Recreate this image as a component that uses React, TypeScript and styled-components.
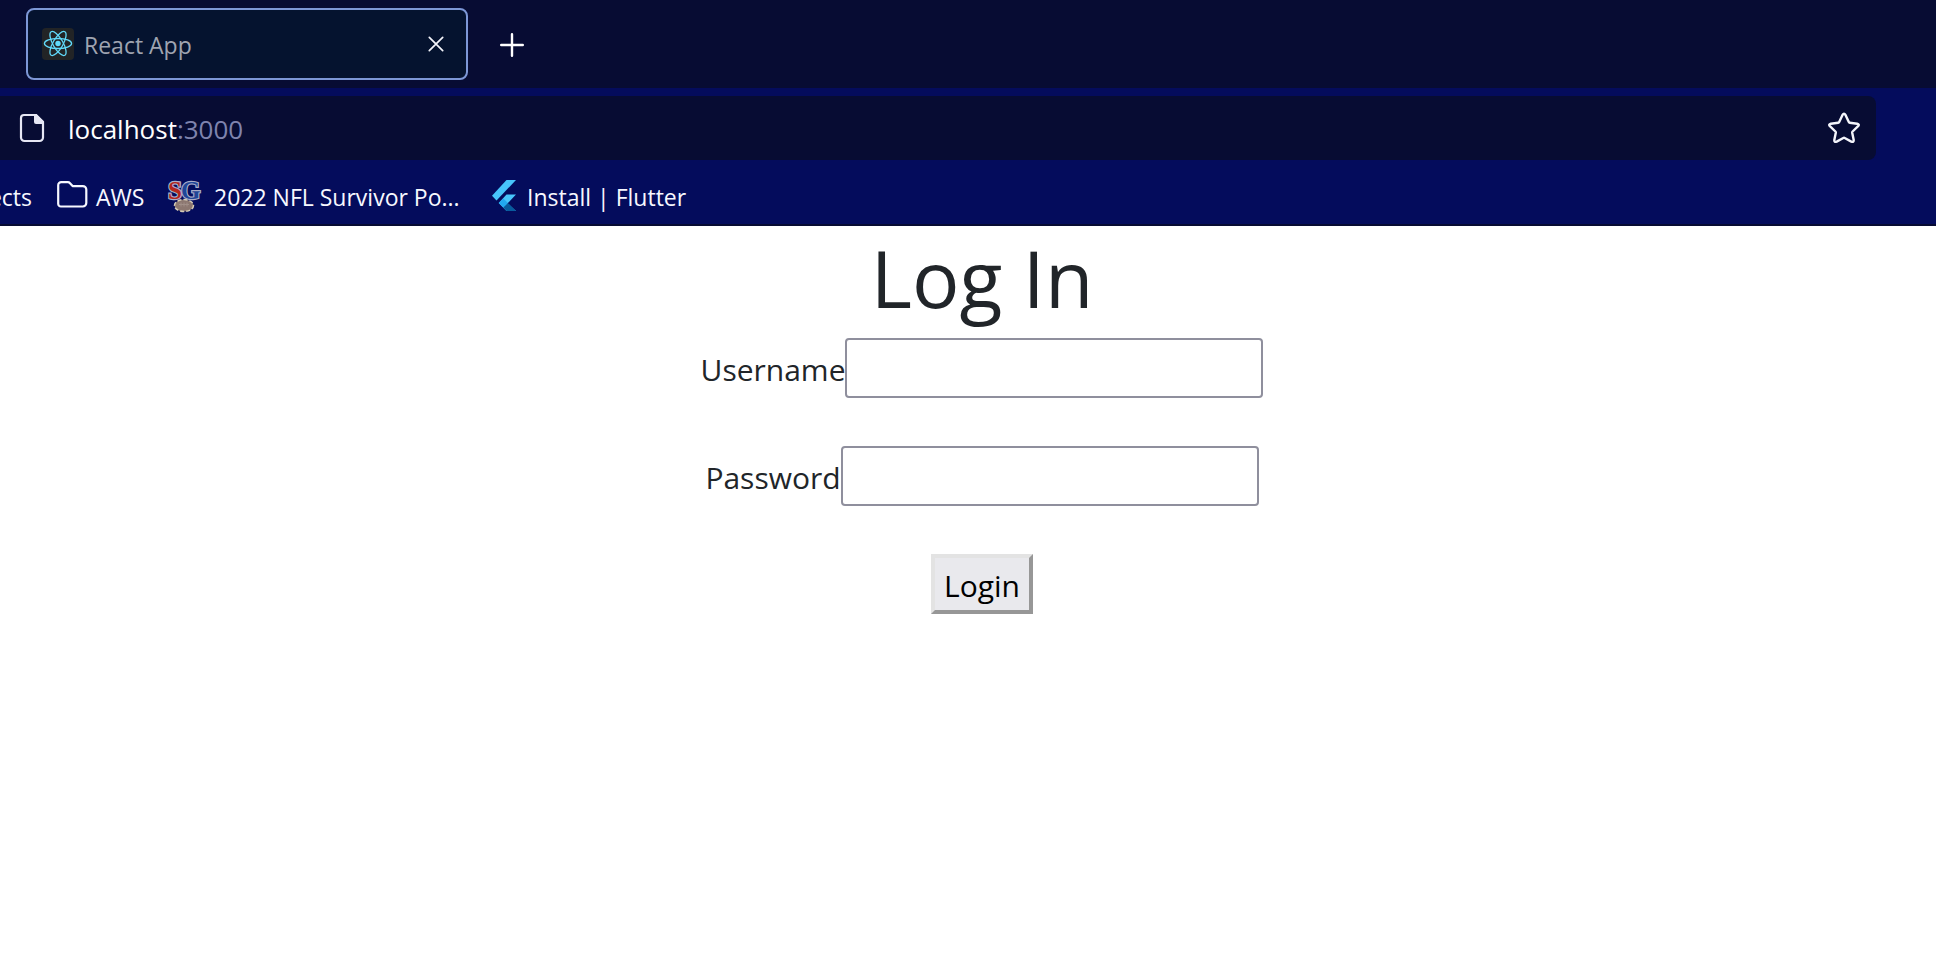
import React from "react";
import styled, { createGlobalStyle } from "styled-components";

const GlobalStyle = createGlobalStyle`
  *, *::before, *::after { box-sizing: border-box; }
  body {
    margin: 0;
    background: #ffffff;
    color: #212529;
    font-family: "Open Sans", "Noto Sans", sans-serif;
  }
`;

const Chrome = styled.header`
  background: #040c5c;
  border-bottom: 2px solid #070b33;
  overflow: hidden;
`;

const TabStrip = styled.div`
  display: flex;
  align-items: center;
  gap: 32px;
  height: 88px;
  padding-left: 26px;
  background: #070c33;
`;

const Tab = styled.div`
  display: flex;
  align-items: center;
  gap: 10px;
  width: 442px;
  height: 72px;
  padding: 0 22px 0 14px;
  background: #05132f;
  border: 2px solid #7d97d6;
  border-radius: 8px;
`;

const TabTitle = styled.span`
  flex: 1;
  padding-top: 2px;
  color: #9fa4b1;
  font-size: 23px;
  line-height: 32px;
`;

const IconButton = styled.button`
  display: flex;
  align-items: center;
  justify-content: center;
  padding: 0;
  border: 0;
  background: none;
  color: #f4f5fb;
`;

const UrlBar = styled.div`
  display: flex;
  align-items: center;
  justify-content: space-between;
  height: 64px;
  margin: 8px 60px 0 0;
  padding: 0 16px;
  background: #070c33;
  border-radius: 0 8px 8px 0;
  color: #e6e7f4;
`;

const Address = styled.div`
  display: flex;
  align-items: center;
  gap: 20px;
`;

const AddressText = styled.span`
  padding-top: 2px;
  color: #ffffff;
  font-size: 26px;
  line-height: 36px;
`;

const Port = styled.span`
  color: #7f84ae;
`;

const Bookmarks = styled.nav`
  display: flex;
  align-items: center;
  height: 64px;
  padding-top: 8px;
`;

const Bookmark = styled.a<{ $gap?: number; $width?: number }>`
  display: flex;
  flex: none;
  align-items: center;
  gap: ${(p) => p.$gap ?? 0}px;
  width: ${(p) => (p.$width ? `${p.$width}px` : "auto")};
  color: #f7f8ff;
  font-size: 23px;
  line-height: 32px;
  text-decoration: none;
  white-space: nowrap;
`;

const BookmarkTitle = styled.span`
  padding-top: 2px;
`;

const ClippedBookmark = styled(Bookmark)`
  justify-content: flex-end;
  width: 32px;
  margin-right: 24px;
`;

const Page = styled.main`
  padding-left: 28px;
  text-align: center;
`;

const Title = styled.h1`
  margin: 0 0 12px;
  padding-top: 4px;
  font-size: 79px;
  font-weight: 400;
  line-height: 96px;
`;

const Form = styled.form`
  display: flex;
  flex-direction: column;
  align-items: center;
  gap: 48px;
`;

const Field = styled.div`
  display: flex;
  align-items: center;
  height: 60px;
`;

const Label = styled.label`
  padding-top: 4px;
  font-size: 30px;
  line-height: 48px;
`;

const Input = styled.input`
  width: 418px;
  height: 60px;
  padding: 2px 4px;
  background: #ffffff;
  border: 2px solid #8f8f9d;
  border-radius: 4px;
  font: inherit;
  font-size: 30px;
`;

const LoginButton = styled.button`
  height: 60px;
  padding: 4px 9px 0;
  background: #e9e9ed;
  border: 4px solid;
  border-color: #e3e3e3 #979797 #979797 #e3e3e3;
  border-radius: 0;
  color: #000000;
  font-family: inherit;
  font-size: 30px;
  line-height: 48px;
`;

const ReactLogo = () => (
  <svg width="32" height="32" viewBox="0 0 32 32" aria-hidden="true">
    <rect width="32" height="32" rx="4" fill="#222426" />
    <g fill="none" stroke="#61dafb" strokeWidth="1.3">
      <ellipse cx="16" cy="15.5" rx="13.6" ry="5" />
      <ellipse cx="16" cy="15.5" rx="13.6" ry="5" transform="rotate(60 16 15.5)" />
      <ellipse cx="16" cy="15.5" rx="13.6" ry="5" transform="rotate(120 16 15.5)" />
    </g>
    <circle cx="16" cy="15.5" r="2.7" fill="#61dafb" />
  </svg>
);

const CloseIcon = () => (
  <svg width="16" height="16" viewBox="0 0 16 16" fill="none" stroke="currentColor" strokeWidth="1.7" strokeLinecap="round" aria-hidden="true">
    <path d="M1.300 1.300l13.400 13.400M14.700 1.300L1.300 14.700" />
  </svg>
);

const PlusIcon = () => (
  <svg width="24" height="26" viewBox="0 0 24 26" fill="none" stroke="#ffffff" strokeWidth="2.4" strokeLinecap="round" aria-hidden="true">
    <path d="M12 3.200v21.600M1.200 14h21.600" />
  </svg>
);

const PageIcon = () => (
  <svg width="32" height="32" viewBox="0 0 32 32" aria-hidden="true">
    <path d="M8 3h12l7 7v15.500a3.500 3.500 0 0 1-3.500 3.500H8.500a3.500 3.500 0 0 1-3.500-3.500V6a3 3 0 0 1 3-3z" fill="none" stroke="currentColor" strokeWidth="2.200" />
    <path d="M18 2h2.500L28 9.500V12h-8a2 2 0 0 1-2-2z" fill="currentColor" />
  </svg>
);

const StarIcon = () => (
  <svg width="32" height="32" viewBox="0 0 32 32" fill="none" stroke="currentColor" strokeWidth="2.4" strokeLinejoin="round" aria-hidden="true">
    <path d="M14.500 2.900q1.500-2.400 3 0l3.300 7.100q.3.600 1 .7l7.400 1q2.600.6.900 2.500l-5.500 5.300q-.5.500-.4 1.200l1.500 7.300q.1 2.500-2.400 1.600l-6.600-3.600q-.7-.4-1.400 0l-6.600 3.600q-2.500.9-2.400-1.600l1.500-7.300q.1-.7-.4-1.200L1.900 14.200q-1.700-1.900.9-2.500l7.400-1q.7-.1 1-.7z" />
  </svg>
);

const FolderIcon = () => (
  <svg width="32" height="32" viewBox="0 0 32 32" fill="none" stroke="currentColor" strokeWidth="2.2" strokeLinejoin="round" aria-hidden="true">
    <path d="M2.200 24V5.200a3 3 0 0 1 3-3h6.600a3 3 0 0 1 2.200 1l2.600 2.900h10.200a3.500 3.500 0 0 1 3.500 3.500V23a3.500 3.500 0 0 1-3.500 3.500H5a2.800 2.800 0 0 1-2.800-2.500z" />
  </svg>
);

const LogoSvg = styled.svg`
  overflow: visible;
`;

const SurvivorLogo = () => (
  <LogoSvg width="34" height="32" viewBox="0 0 34 32" aria-hidden="true">
    <g fontFamily="Liberation Serif" fontWeight="700" fontSize="25" stroke="#a9acc9" strokeWidth="2.4" paintOrder="stroke">
      <text x="1" y="19" fill="#b3261d">S</text>
      <text x="14" y="19" fill="#1f4698">G</text>
    </g>
    <ellipse cx="17" cy="25.500" rx="9.500" ry="6" fill="#8c7770" stroke="#d4cbb6" strokeWidth="1.500" strokeDasharray="4 2" />
    <path d="M12 24.500h10M14 22.500v4M17 22.500v4M20 22.500v4" stroke="#a08e87" strokeWidth="1" />
  </LogoSvg>
);

const FlutterLogo = () => (
  <svg width="26" height="32" viewBox="0 0 26 32" aria-hidden="true">
    <path d="M15.500 0H25L5.500 20.500 1 15.700z" fill="#47c5fb" />
    <path d="M15.500 14.500H25L16.500 23.400 25 31h-9.500L7.700 23z" fill="#47c5fb" />
    <path d="M7.700 23l4.600-4.600 4.600 4.600-4.600 4.600z" fill="#22a8ef" />
    <path d="M12.300 27.600l4.600-4.600L25 31h-9.500z" fill="#075b9d" />
  </svg>
);

export default function App() {
  return (
    <>
      <GlobalStyle />
      <Chrome>
        <TabStrip>
          <Tab>
            <ReactLogo />
            <TabTitle>React App</TabTitle>
            <IconButton type="button" aria-label="Close tab">
              <CloseIcon />
            </IconButton>
          </Tab>
          <IconButton type="button" aria-label="New tab">
            <PlusIcon />
          </IconButton>
        </TabStrip>
        <UrlBar>
          <Address>
            <PageIcon />
            <AddressText>
              localhost<Port>:3000</Port>
            </AddressText>
          </Address>
          <IconButton type="button" aria-label="Bookmark this page">
            <StarIcon />
          </IconButton>
        </UrlBar>
        <Bookmarks aria-label="Bookmarks">
          <ClippedBookmark href="#projects">
            <BookmarkTitle>ects</BookmarkTitle>
          </ClippedBookmark>
          <Bookmark href="#aws" $gap={8} $width={111}>
            <FolderIcon />
            <BookmarkTitle>AWS</BookmarkTitle>
          </Bookmark>
          <Bookmark href="#survivor" $gap={13} $width={324}>
            <SurvivorLogo />
            <BookmarkTitle>2022 NFL Survivor Po...</BookmarkTitle>
          </Bookmark>
          <Bookmark href="#flutter" $gap={10}>
            <FlutterLogo />
            <BookmarkTitle>Install | Flutter</BookmarkTitle>
          </Bookmark>
        </Bookmarks>
      </Chrome>
      <Page>
        <Title>Log In</Title>
        <Form onSubmit={(e: React.FormEvent) => e.preventDefault()}>
          <Field>
            <Label htmlFor="username">Username</Label>
            <Input id="username" type="text" />
          </Field>
          <Field>
            <Label htmlFor="password">Password</Label>
            <Input id="password" type="password" />
          </Field>
          <LoginButton type="submit">Login</LoginButton>
        </Form>
      </Page>
    </>
  );
}
